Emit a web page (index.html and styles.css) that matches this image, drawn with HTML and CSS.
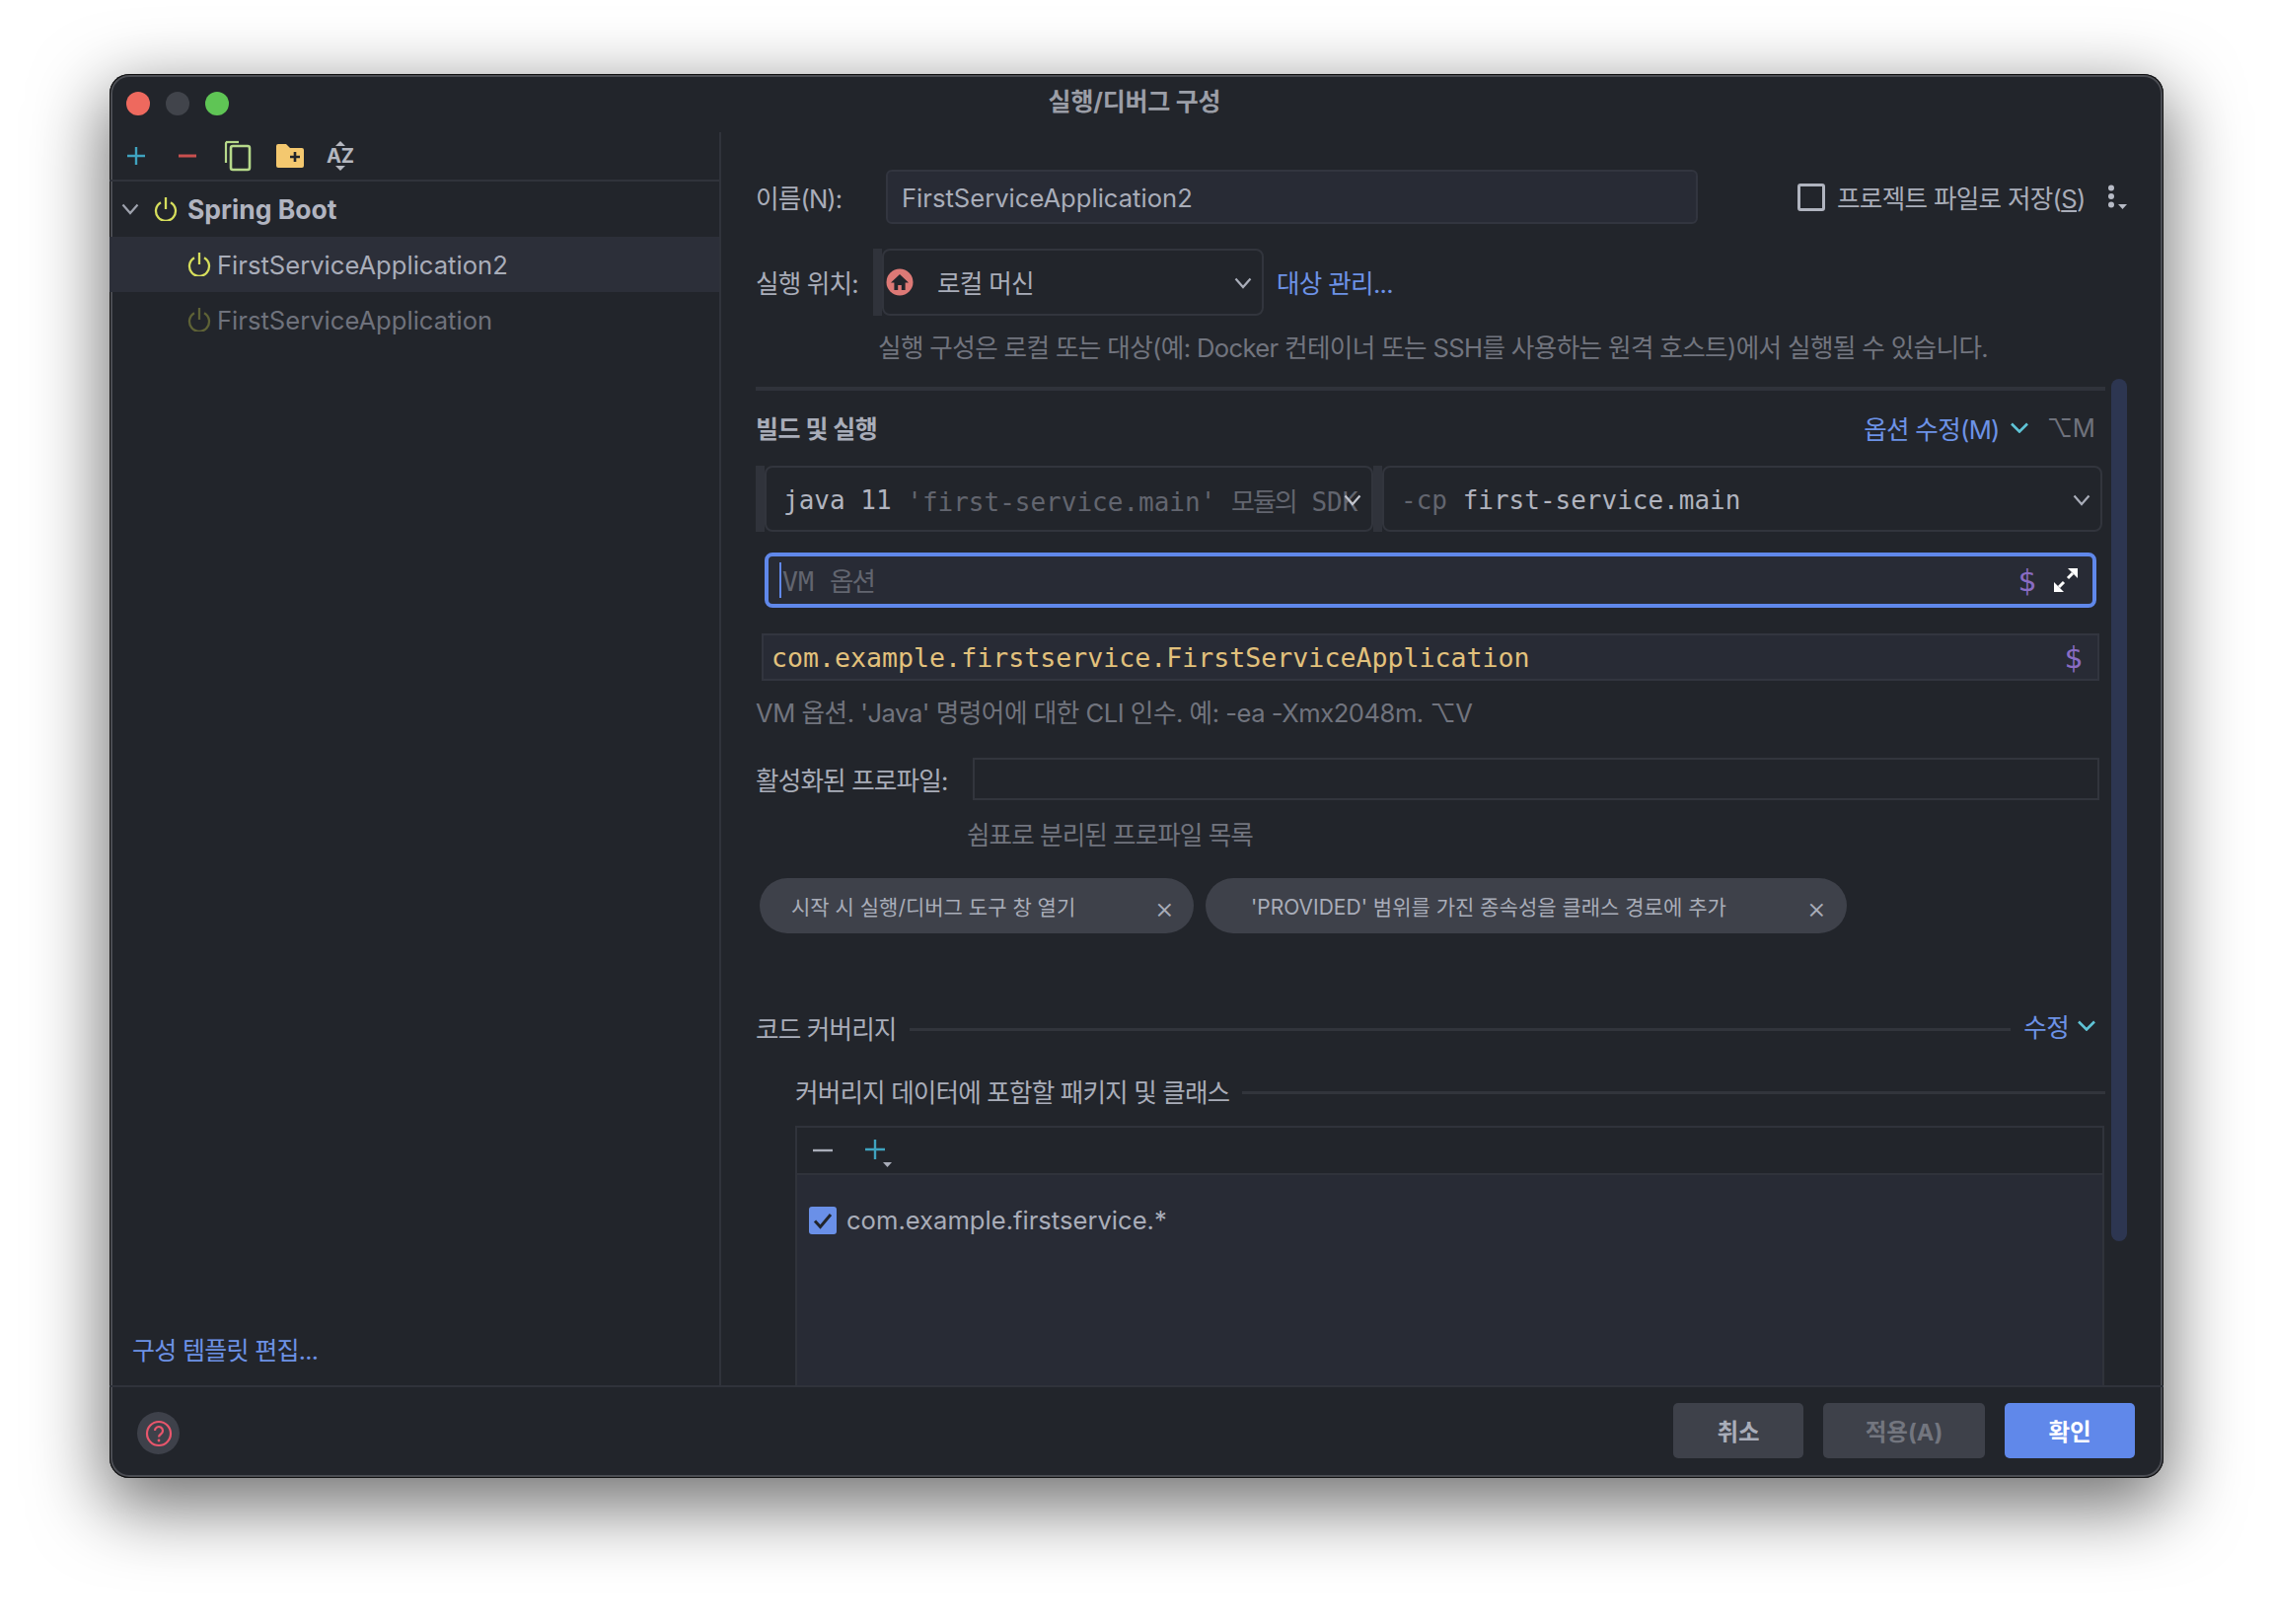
FILE: index.html
```html
<!DOCTYPE html>
<html lang="ko">

<head>
    <meta charset="UTF-8">
    <title>실행/디버그 구성</title>
    <link rel="stylesheet" href="styles.css">
</head>

<body>
    <div class="window">
        <div class="titlebar">
            <div class="lights">
                <span class="light red"></span>
                <span class="light grey"></span>
                <span class="light green"></span>
            </div>
            <div class="title">실행/디버그 구성</div>
        </div>

        <div class="main">
            <div class="sidebar">
                <div class="side-toolbar">
                    <svg class="tool tool-plus" width="22" height="22" viewBox="0 0 22 22"><path d="M11 2v18M2 11h18" stroke="#3fa3bf" stroke-width="2.4"/></svg>
                    <svg class="tool tool-minus" width="22" height="22" viewBox="0 0 22 22"><path d="M2 11h18" stroke="#c9504f" stroke-width="3"/></svg>
                    <svg class="tool tool-copy" width="28" height="32" viewBox="0 0 28 32"><path d="M9 2H3.5A1.5 1.5 0 0 0 2 3.5V23" fill="none" stroke="#b6d98a" stroke-width="2.2"/><path d="M2 2h13" fill="none" stroke="#b6d98a" stroke-width="2.2"/><rect x="7" y="6" width="19" height="24" rx="2" fill="none" stroke="#b6d98a" stroke-width="2.6"/></svg>
                    <svg class="tool tool-folder" width="28" height="24" viewBox="0 0 28 24"><path d="M2 0h8l4 4h12a2 2 0 0 1 2 2v16a2 2 0 0 1-2 2H2a2 2 0 0 1-2-2V2a2 2 0 0 1 2-2z" fill="#f4c86f"/><path d="M19 8v10M14 13h10" stroke="#22252b" stroke-width="2.6"/></svg>
                    <div class="tool-sort">
                        <span class="tri-up"></span>
                        <span class="az">AZ</span>
                        <span class="tri-down"></span>
                    </div>
                </div>

                <div class="tree-head">
                    <svg class="chev-tree" width="18" height="12" viewBox="0 0 18 12"><path d="M1.5 1.5L9 10l7.5-8.5" fill="none" stroke="#9ea2ad" stroke-width="2.2"/></svg>
                    <svg class="power" width="24" height="24" viewBox="0 0 24 24"><path d="M7 5.2a10 10 0 1 0 10 0" fill="none" stroke="#d6de5c" stroke-width="2.3"/><path d="M12 0v12" stroke="#d6de5c" stroke-width="2.3"/></svg>
                    <span class="tree-title">Spring Boot</span>
                </div>
                <div class="tree-row selected">
                    <svg class="power" width="24" height="24" viewBox="0 0 24 24"><path d="M7 5.2a10 10 0 1 0 10 0" fill="none" stroke="#d6de5c" stroke-width="2.3"/><path d="M12 0v12" stroke="#d6de5c" stroke-width="2.3"/></svg>
                    <span>FirstServiceApplication2</span>
                </div>
                <div class="tree-row dim">
                    <svg class="power" width="24" height="24" viewBox="0 0 24 24"><path d="M7 5.2a10 10 0 1 0 10 0" fill="none" stroke="#5e6236" stroke-width="2.3"/><path d="M12 0v12" stroke="#5e6236" stroke-width="2.3"/></svg>
                    <span>FirstServiceApplication</span>
                </div>

                <a class="link side-link">구성 템플릿 편집...</a>
            </div>

            <div class="form">
                <div class="row name-row">
                    <label class="lbl name-lbl">이름(N):</label>
                    <div class="input name-input">FirstServiceApplication2</div>
                    <span class="box"></span>
                    <span class="save-lbl">프로젝트 파일로 저장(<u>S</u>)</span>
                    <svg class="kebab" width="20" height="26" viewBox="0 0 20 26"><circle cx="4" cy="3.5" r="3" fill="#b7bbc6"/><circle cx="4" cy="12" r="3" fill="#b7bbc6"/><circle cx="4" cy="20.5" r="3" fill="#b7bbc6"/><path d="M11 20h9l-4.5 5z" fill="#b7bbc6"/></svg>
                </div>

                <div class="row run-row">
                    <label class="lbl run-lbl">실행 위치:</label>
                    <span class="grip"></span>
                    <div class="combo run-combo">
                        <svg class="house" width="28" height="28" viewBox="0 0 28 28"><circle cx="14" cy="14" r="13.5" fill="#dd7976"/><path d="M14 6l9 8.5h-3.4V22h-3.8v-5h-3.6v5H8.4v-7.5H5z" fill="#22252b"/></svg>
                        <span class="run-text">로컬 머신</span>
                        <svg class="chev chev-run" width="18" height="12" viewBox="0 0 18 12"><path d="M1.5 1.5L9 10l7.5-8.5" fill="none" stroke="#a9adb9" stroke-width="2.2"/></svg>
                    </div>
                    <a class="link manage-link">대상 관리...</a>
                </div>

                <div class="hint run-hint">실행 구성은 로컬 또는 대상(예: Docker 컨테이너 또는 SSH를 사용하는 원격 호스트)에서 실행될 수 있습니다.</div>
                <div class="sep"></div>

                <div class="row build-head">
                    <span class="section-bold">빌드 및 실행</span>
                    <a class="link opt-link">옵션 수정(M)</a>
                    <svg class="chev-link" width="18" height="11" viewBox="0 0 18 11"><path d="M1 1.5L9 9.5l8-8" fill="none" stroke="#5fc4d6" stroke-width="2.6"/></svg>
                    <span class="shortcut">⌥M</span>
                </div>

                <div class="row java-row">
                    <span class="grip"></span>
                    <div class="combo java-combo mono">
                        <span class="mono-main">java 11</span>&nbsp;<span class="mono-dim">'first-service.main' <span class="mono-ko">모듈의</span> SDK</span>
                        <svg class="chev chev-java" width="18" height="12" viewBox="0 0 18 12"><path d="M1.5 1.5L9 10l7.5-8.5" fill="none" stroke="#c3c6cf" stroke-width="2.2"/></svg>
                    </div>
                    <span class="grip"></span>
                    <div class="combo cp-combo mono">
                        <span class="mono-dim">-cp</span>&nbsp;<span class="mono-main">first-service.main</span>
                        <svg class="chev chev-cp" width="18" height="12" viewBox="0 0 18 12"><path d="M1.5 1.5L9 10l7.5-8.5" fill="none" stroke="#a9adb9" stroke-width="2.2"/></svg>
                    </div>
                </div>

                <div class="vm-field mono">
                    <span class="caret"></span>
                    <span class="mono-dim vm-text">VM <span class="mono-ko">옵션</span></span>
                    <span class="dollar">$</span>
                    <svg class="expand" width="24" height="24" viewBox="0 0 24 24"><path d="M14 0h10v10z" fill="#fff"/><path d="M14 10l5-5" stroke="#fff" stroke-width="3"/><path d="M10 24H0V14z" fill="#fff"/><path d="M10 14l-5 5" stroke="#fff" stroke-width="3"/></svg>
                </div>

                <div class="class-field mono">
                    <span>com.example.firstservice.FirstServiceApplication</span>
                    <span class="dollar">$</span>
                </div>

                <div class="hint vm-hint">VM 옵션. 'Java' 명령어에 대한 CLI 인수. 예: -ea -Xmx2048m. ⌥V</div>

                <div class="row profile-row">
                    <label class="lbl profile-lbl">활성화된 프로파일:</label>
                    <div class="profile-input"></div>
                </div>
                <div class="hint profile-hint">쉼표로 분리된 프로파일 목록</div>

                <div class="row chips">
                    <div class="chip chip-one"><span>시작 시 실행/디버그 도구 창 열기</span><span class="chip-x">×</span></div>
                    <div class="chip chip-two"><span>'PROVIDED' 범위를 가진 종속성을 클래스 경로에 추가</span><span class="chip-x">×</span></div>
                </div>

                <div class="row cover-head">
                    <span class="lbl">코드 커버리지</span>
                    <span class="rule"></span>
                    <a class="link edit-link">수정</a>
                    <svg class="chev-link chev-edit" width="18" height="11" viewBox="0 0 18 11"><path d="M1 1.5L9 9.5l8-8" fill="none" stroke="#5fc4d6" stroke-width="2.6"/></svg>
                </div>
                <div class="row sub-head">
                    <span class="lbl">커버리지 데이터에 포함할 패키지 및 클래스</span>
                    <span class="rule"></span>
                </div>

                <div class="pkg-table">
                    <div class="pkg-toolbar">
                        <svg width="20" height="20" viewBox="0 0 20 20"><path d="M0 10h20" stroke="#a9adb9" stroke-width="2.4"/></svg>
                        <svg class="pkg-plus" width="32" height="32" viewBox="0 0 32 32"><path d="M11 1v20M1 11h20" stroke="#3fa3bf" stroke-width="2.4"/><path d="M19 24h9l-4.5 5z" fill="#a9adb9"/></svg>
                    </div>
                    <div class="pkg-list">
                        <div class="pkg-item">
                            <svg width="28" height="28" viewBox="0 0 28 28"><rect width="28" height="28" rx="3" fill="#6a90e8"/><path d="M6 14.5l5.5 6L22 8" fill="none" stroke="#22252b" stroke-width="3"/></svg>
                            <span>com.example.firstservice.*</span>
                        </div>
                    </div>
                </div>

                <div class="scrollbar"></div>
            </div>
        </div>

        <div class="footer">
            <div class="help">
                <svg width="28" height="28" viewBox="0 0 28 28"><circle cx="14" cy="14" r="12" fill="none" stroke="#e9566c" stroke-width="2.2"/><path d="M10 11a4 4 0 1 1 6.3 3.3c-1.4.9-2.3 1.6-2.3 3.2" fill="none" stroke="#e9566c" stroke-width="2.2"/><circle cx="14" cy="21" r="1.4" fill="#e9566c"/></svg>
            </div>
            <button class="btn btn-cancel">취소</button>
            <button class="btn btn-apply">적용(A)</button>
            <button class="btn btn-ok">확인</button>
        </div>
    </div>
</body>

</html>
```

FILE: styles.css
```css
* {
    box-sizing: border-box;
}

body {
    margin: 0;
    padding: 75px 0 0 111px;
    height: 1646px;
    overflow: hidden;
    background-color: #fff;
    font-family: 'Inter', 'Noto Sans CJK KR', 'DejaVu Sans', sans-serif;
    font-size: 25.6px;
    color: #a9adb9;
}

.window {
    width: 2082px;
    height: 1423px;
    display: flex;
    flex-direction: column;
    background-color: #22252b;
    border-radius: 20px;
    box-shadow: inset 0 0 0 1px #111, inset 0 0 0 3px #4a4c52, 0 24px 72px 6px rgba(0, 0, 0, 0.55);
}

.titlebar {
    height: 59px;
    flex: none;
    display: grid;
    grid-template-columns: 1fr auto 1fr;
    align-items: center;
    padding: 0 17px;
}

.lights {
    display: flex;
    gap: 16px;
}

.light {
    width: 24px;
    height: 24px;
    border-radius: 50%;
}

.light.red {
    background-color: #ee695e;
}

.light.grey {
    background-color: #41444b;
}

.light.green {
    background-color: #5fc555;
}

.title {
    font-size: 25px;
    font-weight: 700;
    letter-spacing: -0.2px;
    color: #9b9ea7;
    margin-top: -7px;
    margin-right: 4px;
}

.main {
    height: 1270px;
    flex: none;
    display: flex;
}

/* left list */
.sidebar {
    width: 620px;
    flex: none;
    display: flex;
    flex-direction: column;
    border-right: 2px solid #30333b;
}

.side-toolbar {
    height: 50px;
    flex: none;
    display: flex;
    align-items: center;
    padding-left: 16px;
    border-bottom: 2px solid #30333b;
}

.tool-minus {
    margin-left: 30px;
}

.tool-copy {
    margin-left: 26px;
}

.tool-folder {
    margin-left: 25px;
}

.tool-sort {
    margin-left: 24px;
    width: 26px;
    display: flex;
    flex-direction: column;
    align-items: center;
    gap: 2px;
}

.az {
    font-size: 20px;
    font-weight: 700;
    line-height: 16px;
    color: #b4b7c0;
}

.tri-up,
.tri-down {
    width: 0;
    height: 0;
    border-left: 5px solid transparent;
    border-right: 5px solid transparent;
}

.tri-up {
    border-bottom: 5px solid #b4b7c0;
}

.tri-down {
    border-top: 5px solid #b4b7c0;
}

.tree-head {
    height: 56px;
    flex: none;
    display: flex;
    align-items: center;
    padding-left: 12px;
}

.chev-tree {
    margin-right: 15px;
}

.tree-head .power {
    margin-right: 10px;
}

.tree-title {
    font-size: 26.5px;
    font-weight: 700;
    color: #b1b4c0;
}

.tree-row {
    height: 56px;
    flex: none;
    display: flex;
    align-items: center;
    padding-left: 79px;
    gap: 6px;
}

.tree-row.selected {
    background-color: #2c2f39;
}

.tree-row.dim {
    color: #6f727c;
}

.side-link {
    margin-top: auto;
    margin-left: 23px;
    margin-bottom: 19px;
    font-size: 25px;
    letter-spacing: -0.1px;
}

.link {
    color: #6d92e6;
    letter-spacing: -0.7px;
}

/* right form */
.form {
    flex: 1;
    min-width: 0;
    padding-left: 35px;
    position: relative;
    overflow: hidden;
}

.row {
    display: flex;
    align-items: center;
}

.lbl {
    color: #a9adb9;
    white-space: nowrap;
    letter-spacing: -0.85px;
}

.name-row {
    margin-top: 38px;
    height: 55px;
}

.name-lbl {
    width: 132px;
}

.input {
    background-color: #282b35;
    border: 2px solid #32353f;
    border-radius: 6px;
}

.name-input {
    width: 823px;
    height: 55px;
    padding-left: 14px;
    line-height: 53px;
}

.box {
    width: 28px;
    height: 28px;
    margin-left: 101px;
    border: 3px solid #b0b4bf;
    border-radius: 3px;
}

.save-lbl {
    margin-left: 12px;
    white-space: nowrap;
    letter-spacing: -0.7px;
}

.kebab {
    margin-left: 22px;
}

.run-row {
    margin-top: 25px;
    height: 68px;
}

.run-lbl {
    width: 119px;
    margin-top: -2px;
}

.grip {
    width: 9px;
    align-self: stretch;
    flex: none;
    background-color: #30333b;
}

.combo {
    border: 2px solid #32353d;
    border-radius: 8px;
    display: flex;
    align-items: center;
    position: relative;
    white-space: nowrap;
}

.run-combo {
    width: 387px;
    height: 68px;
    padding-left: 2px;
    letter-spacing: -0.7px;
}

.run-text {
    margin-left: 24px;
    margin-top: -2px;
}

.chev {
    position: absolute;
    top: 27px;
}

.chev-run {
    right: 10px;
}

.manage-link {
    margin-left: 13px;
    margin-top: -2px;
}

.hint {
    color: #71747e;
    white-space: nowrap;
    letter-spacing: -0.65px;
}

.run-hint {
    margin-top: 15px;
    height: 36px;
    line-height: 36px;
    padding-left: 124px;
}

.sep {
    margin-top: 21px;
    width: 1368px;
    height: 4px;
    background-color: #30333b;
}

.build-head {
    margin-top: 15px;
    height: 44px;
    width: 1368px;
    padding-right: 10px;
}

.section-bold {
    font-size: 25px;
    font-weight: 700;
    letter-spacing: -0.5px;
    color: #a9adb9;
    margin-right: auto;
}

.chev-link {
    margin-left: 11px;
}

.shortcut {
    margin-left: 19px;
    color: #6f727c;
}

.mono {
    font-family: 'DejaVu Sans Mono', 'Noto Sans CJK KR', monospace;
    font-size: 26.6px;
}

.mono-main {
    color: #b1b4bf;
}

.mono-dim {
    color: #62656f;
}

.mono-ko {
    letter-spacing: -2px;
}

.java-row {
    margin-top: 17px;
    height: 67px;
}

.java-combo {
    width: 617px;
    height: 67px;
    padding-left: 17px;
    padding-top: 2px;
    font-size: 26px;
}

.chev-java {
    right: 10px;
}

.cp-combo {
    width: 730px;
    height: 67px;
    padding-left: 17px;
    padding-top: 2px;
    font-size: 26px;
}

.chev-cp {
    right: 10px;
}

.vm-field {
    margin-top: 21px;
    margin-left: 9px;
    width: 1350px;
    height: 56px;
    border: 4px solid #6088ea;
    border-radius: 8px;
    background-color: #282b35;
    display: flex;
    align-items: center;
    padding-left: 11px;
    padding-right: 15px;
}

.caret {
    width: 2px;
    height: 36px;
    background-color: #6088ea;
}

.vm-text {
    margin-left: 1px;
    margin-right: auto;
    margin-top: -2px;
}

.dollar {
    color: #8a6cc4;
    font-size: 31px;
    line-height: 1;
}

.expand {
    margin-left: 18px;
}

.class-field {
    margin-top: 26px;
    margin-left: 6px;
    width: 1356px;
    height: 48px;
    border: 2px solid #32353f;
    background-color: #282b35;
    color: #e2c17c;
    display: flex;
    align-items: center;
    justify-content: space-between;
    padding-left: 8px;
    padding-right: 15px;
}

.vm-hint {
    margin-top: 16px;
    height: 34px;
    line-height: 34px;
    letter-spacing: -0.48px;
}

.profile-row {
    margin-top: 28px;
    height: 43px;
}

.profile-lbl {
    width: 220px;
}

.profile-input {
    width: 1142px;
    height: 43px;
    border: 2px solid #32353d;
}

.profile-hint {
    margin-top: 19px;
    height: 34px;
    line-height: 34px;
    padding-left: 214px;
    letter-spacing: -0.95px;
}

.chips {
    margin-top: 26px;
    margin-left: 4px;
    gap: 12px;
}

.chip {
    height: 56px;
    border-radius: 28px;
    background-color: #3e414a;
    display: flex;
    align-items: center;
    justify-content: space-between;
    font-size: 21px;
    color: #a9adb9;
    white-space: nowrap;
}

.chip-one {
    width: 440px;
    padding-left: 32px;
    padding-right: 20px;
}

.chip-two {
    width: 650px;
    padding-left: 46px;
    padding-right: 21px;
}

.chip-x {
    font-size: 30px;
    font-weight: 300;
    line-height: 30px;
    margin-top: 4px;
}

.cover-head {
    margin-top: 75px;
    height: 40px;
    width: 1368px;
    padding-right: 10px;
}

.rule {
    flex: 1;
    height: 3px;
    margin: 4px 13px 0;
    background-color: #32353c;
}

.edit-link {
    margin-top: -3px;
}

.chev-edit {
    margin-left: 9px;
    margin-top: -3px;
}

.sub-head {
    margin-top: 24px;
    margin-left: 40px;
    height: 40px;
    width: 1328px;
}

.sub-head .rule {
    margin-right: 0;
}

.pkg-table {
    margin-top: 16px;
    margin-left: 40px;
    width: 1327px;
    height: 264px;
    border: 2px solid #30333b;
    border-bottom: 0;
    display: flex;
    flex-direction: column;
}

.pkg-toolbar {
    height: 48px;
    flex: none;
    display: flex;
    align-items: center;
    padding-left: 16px;
    border-bottom: 2px solid #30333b;
}

.pkg-plus {
    margin-left: 32px;
    margin-top: 8px;
}

.pkg-list {
    flex: 1;
    background-color: #282b35;
}

.pkg-item {
    margin-top: 30px;
    padding-left: 12px;
    display: flex;
    align-items: center;
    gap: 10px;
}

.scrollbar {
    position: absolute;
    left: 1409px;
    top: 250px;
    width: 16px;
    height: 874px;
    border-radius: 8px;
    background-color: #2d3651;
}

/* bottom buttons */
.footer {
    flex: 1;
    display: flex;
    align-items: flex-start;
    padding: 16px 29px 0 28px;
    border-top: 2px solid #30333b;
}

.help {
    width: 43px;
    height: 43px;
    margin-top: 9px;
    margin-right: auto;
    border-radius: 50%;
    background-color: #3e414a;
    display: flex;
    align-items: center;
    justify-content: center;
}

.btn {
    height: 56px;
    border: 0;
    border-radius: 5px;
    background-color: #3e414a;
    font-family: inherit;
    font-size: 23.5px;
    font-weight: 700;
    color: #a9adb9;
}

.btn-cancel {
    width: 132px;
}

.btn-apply {
    width: 164px;
    margin-left: 20px;
    color: #73767f;
}

.btn-ok {
    width: 132px;
    margin-left: 20px;
    background-color: #6088ea;
    color: #fff;
}
```
